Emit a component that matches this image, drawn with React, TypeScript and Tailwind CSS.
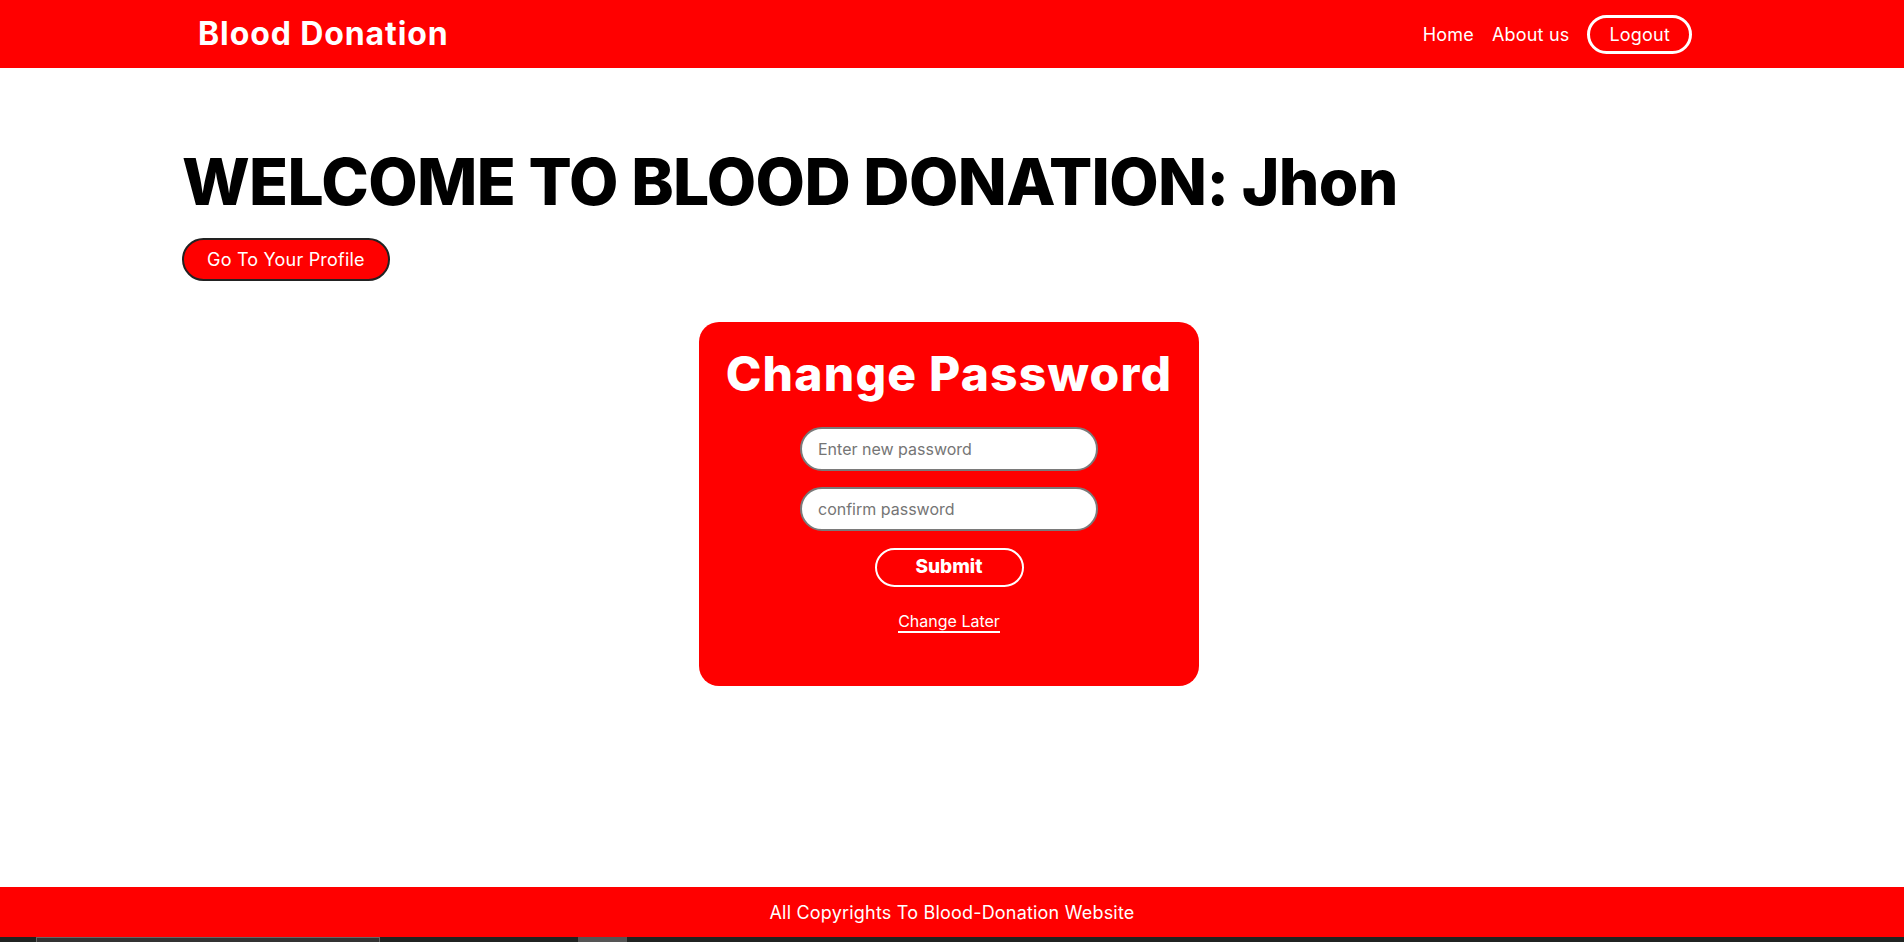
export default function App() {
  return (
    <div className="min-h-[942px] flex flex-col bg-white font-['Inter','Noto_Sans',sans-serif]">
      <header className="h-[68px] bg-[#ff0000] flex items-center justify-between pl-[198px] pr-[212px]">
        <a href="#" className="text-white text-[32px] font-bold leading-none tracking-[0.9px]">
          Blood Donation
        </a>
        <nav className="flex items-center text-white text-[18px] tracking-[0.2px]">
          <a href="#" className="mr-[18px]">Home</a>
          <a href="#" className="mr-[18px]">About us</a>
          <button className="h-[39px] px-[19px] rounded-full border-[3px] border-white text-white">Logout</button>
        </nav>
      </header>

      <main className="flex-1 pl-[182px] pr-[188px]">
        <h1 className="mt-[74px] text-[64px] font-extrabold leading-[80px] tracking-[-0.65px] text-black">
          WELCOME TO BLOOD DONATION: Jhon
        </h1>
        <button className="mt-[16px] h-[43px] px-[23px] rounded-full border-2 border-[#222] bg-[#ff0000] text-white text-[18px] tracking-[0.2px]">
          Go To Your Profile
        </button>

        <div className="mt-[41px] flex justify-center">
          <div className="w-[500px] h-[364px] bg-[#ff0000] rounded-[20px] flex flex-col items-center pt-[22px]">
            <h2 className="text-white text-[48px] font-extrabold leading-[60px] tracking-[1.2px]">Change Password</h2>
            <form className="flex flex-col items-center mt-[23px]">
              <input
                type="password"
                placeholder="Enter new password"
                className="w-[298px] h-[44px] rounded-full border-2 border-[#7a7a7a] bg-white px-[16px] text-[16px] placeholder:text-[#757575] outline-none"
              />
              <input
                type="password"
                placeholder="confirm password"
                className="mt-[16px] w-[298px] h-[44px] rounded-full border-2 border-[#7a7a7a] bg-white px-[16px] text-[16px] placeholder:text-[#757575] outline-none"
              />
              <button type="button" className="mt-[17px] w-[149px] h-[39px] rounded-full border-2 border-white text-white text-[19px] font-extrabold">
                Submit
              </button>
              <a href="#" className="mt-[24px] text-white text-[16px] leading-[20px] border-b-2 border-white">
                Change Later
              </a>
            </form>
          </div>
        </div>
      </main>

      <footer className="h-[50px] bg-[#ff0000] flex items-center justify-center text-white text-[18px] tracking-[0.2px]">
        All Copyrights To Blood-Donation Website
      </footer>
      <div className="h-[5px] bg-[#202321] flex">
        <div className="ml-[36px] w-[344px] bg-[#333] border-t border-x border-[#666]" />
        <div className="ml-[198px] w-[49px] bg-[#555]" />
      </div>
    </div>
  );
}
